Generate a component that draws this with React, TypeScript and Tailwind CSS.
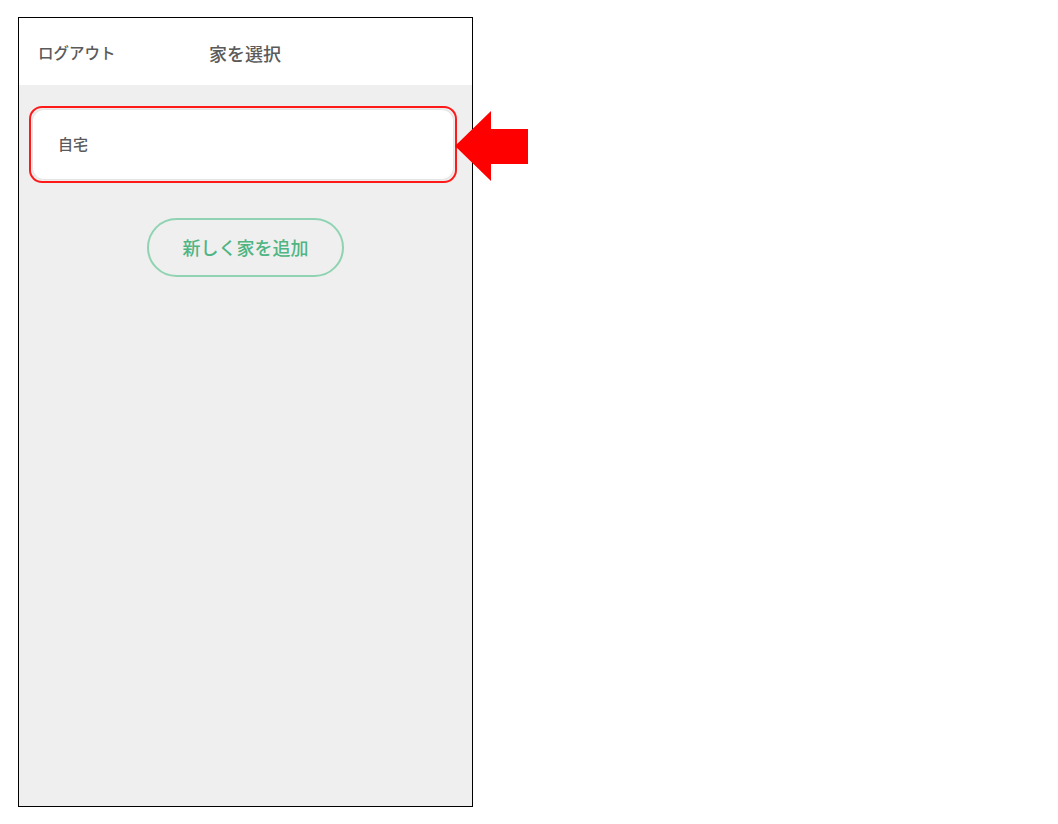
export default function App() {
  return (
    <div className="min-h-screen bg-white pl-[18px] pt-[17px] font-['Noto_Sans_CJK_JP','Noto_Sans',sans-serif]">
      <div className="relative flex h-[790px] w-[455px] flex-col border border-black bg-[#efefef]">
        <header className="flex h-[67px] shrink-0 items-center bg-white pt-[3px]">
          <span className="w-[190px] pl-[19px] text-[15.5px] font-medium text-[#5a5a5a]">ログアウト</span>
          <span className="text-[18px] font-medium text-[#5a5a5a]">家を選択</span>
        </header>

        <div className="flex flex-col pl-[10px] pr-[15px] pt-[21px]">
          <div className="relative rounded-[13px] border-2 border-[#ff1a1a] p-[2px]">
            <div className="flex h-[69px] items-center rounded-[11px] bg-white pl-[25px] shadow-[0_0_2px_rgba(0,0,0,0.15)]">
              <span className="text-[15px] font-medium text-[#5a5a5a]">自宅</span>
            </div>
            {/* annotation arrow */}
            <svg
              className="absolute left-[424px] top-[2px]"
              width="74"
              height="72"
              viewBox="0 0 74 72"
            >
              <polygon
                points="0,36 36,1 36,19 73,19 73,54 36,54 36,71"
                fill="#ff0000"
              />
            </svg>
          </div>

          <div className="mt-[35px] flex justify-center pl-[5px]">
            <button
              type="button"
              className="h-[59px] w-[197px] rounded-full border-2 border-[#8fd3b2] text-[18px] font-medium text-[#4fb583]"
            >
              新しく家を追加
            </button>
          </div>
        </div>
      </div>
    </div>
  );
}
